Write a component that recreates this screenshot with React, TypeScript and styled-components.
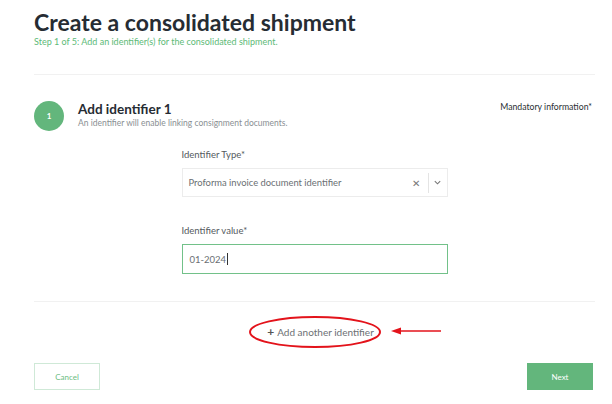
import styled, { createGlobalStyle } from 'styled-components';

const GlobalStyle = createGlobalStyle`
  * { box-sizing: border-box; }
  body {
    margin: 0;
    background: #ffffff;
    font-family: Lato, "Noto Sans", sans-serif;
  }
`;

const Page = styled.div`
  width: 612px;
  height: 404px;
  padding: 8px 17px 0 34px;
  overflow: hidden;
`;

const Title = styled.h1`
  margin: 0;
  font-size: 23px;
  line-height: 28px;
  font-weight: 700;
  color: #262c33;
`;

const Subtitle = styled.p`
  margin: 0;
  font-size: 9px;
  line-height: 12px;
  color: #5dba77;
`;

const Divider = styled.hr<{ $top: number }>`
  margin: ${(p) => p.$top}px 0 0;
  border: 0;
  border-top: 1px solid #f1f1f1;
`;

const StepHeader = styled.div`
  display: flex;
  align-items: flex-start;
  margin-top: 26px;
`;

const StepCircle = styled.div`
  width: 30px;
  height: 30px;
  border-radius: 50%;
  background: #63b67c;
  color: #fff;
  font-size: 8px;
  font-weight: 700;
  display: flex;
  align-items: center;
  justify-content: center;
  flex-shrink: 0;
`;

const StepText = styled.div`
  margin-left: 14px;
  flex: 1;
`;

const StepTitle = styled.div`
  font-size: 13.5px;
  line-height: 16px;
  font-weight: 700;
  color: #262c33;
`;

const StepHint = styled.div`
  margin-top: 1px;
  font-size: 8.5px;
  line-height: 10px;
  color: #8a8f93;
`;

const Mandatory = styled.div`
  font-size: 8.7px;
  line-height: 12px;
  color: #2a2f33;
  margin-right: 3px;
`;

const Form = styled.div`
  width: 266px;
  margin: 18px auto 0;
  display: flex;
  flex-direction: column;
`;

const Label = styled.label`
  font-size: 9.5px;
  line-height: 12px;
  color: #555a5e;
  margin-bottom: 7px;
`;

const SelectBox = styled.div`
  height: 29px;
  border: 1px solid #ececec;
  display: flex;
  align-items: center;
  padding-left: 6px;
  margin-bottom: 28px;
`;

const SelectValue = styled.span`
  flex: 1;
  font-size: 9.4px;
  color: #6a6f73;
`;

const ClearIcon = styled.span`
  font-size: 10px;
  color: #777;
  width: 18px;
  text-align: center;
`;

const Separator = styled.span`
  width: 1px;
  height: 20px;
  background: #e4e4e4;
  margin: 0 4px 0 3px;
`;

const Chevron = styled.svg`
  width: 9px;
  height: 9px;
  margin-right: 5px;
`;

const ValueInput = styled.div`
  height: 30px;
  border: 1.5px solid #72c189;
  display: flex;
  align-items: center;
  padding-left: 7px;
  font-size: 9.5px;
  color: #6a6f73;
`;

const Caret = styled.span`
  display: inline-block;
  width: 1px;
  height: 12px;
  background: #333;
  margin-left: 1px;
`;

const AddRow = styled.div`
  display: flex;
  justify-content: center;
  align-items: center;
  margin-top: 20px;
  position: relative;
  height: 20px;
`;

const AddButton = styled.button`
  background: none;
  border: 0;
  padding: 0 0 0 12px;
  font-family: inherit;
  font-size: 10px;
  color: #6c7074;
  display: flex;
  align-items: center;
  gap: 3px;
`;

const Plus = styled.span`
  font-size: 12px;
  font-weight: 700;
  color: #555;
  line-height: 1;
`;

const Annotation = styled.svg`
  position: absolute;
  left: calc(50% - 66px);
  top: -10px;
  width: 200px;
  height: 40px;
  overflow: visible;
  pointer-events: none;
`;

const Footer = styled.div`
  display: flex;
  justify-content: space-between;
  margin-top: 21px;
  padding-right: 2px;
`;

const FooterButton = styled.button<{ $primary?: boolean }>`
  width: 66px;
  height: 27px;
  font-family: inherit;
  font-size: 8px;
  border: 1px solid ${(p) => (p.$primary ? '#63b67c' : '#cfe9d7')};
  background: ${(p) => (p.$primary ? '#63b67c' : '#fff')};
  color: ${(p) => (p.$primary ? '#fff' : '#6cbd83')};
`;

export default function App() {
  return (
    <>
      <GlobalStyle />
      <Page>
        <Title>Create a consolidated shipment</Title>
        <Subtitle>Step 1 of 5: Add an identifier(s) for the consolidated shipment.</Subtitle>
        <Divider $top={26} />

        <StepHeader>
          <StepCircle>1</StepCircle>
          <StepText>
            <StepTitle>Add identifier 1</StepTitle>
            <StepHint>An identifier will enable linking consignment documents.</StepHint>
          </StepText>
          <Mandatory>Mandatory information*</Mandatory>
        </StepHeader>

        <Form>
          <Label>Identifier Type*</Label>
          <SelectBox>
            <SelectValue>Proforma invoice document identifier</SelectValue>
            <ClearIcon>✕</ClearIcon>
            <Separator />
            <Chevron viewBox="0 0 10 10">
              <path d="M2 3.5 L5 6.5 L8 3.5" fill="none" stroke="#777" strokeWidth="1.2" />
            </Chevron>
          </SelectBox>
          <Label>Identifier value*</Label>
          <ValueInput>
            01-2024
            <Caret />
          </ValueInput>
        </Form>

        <Divider $top={27} />

        <AddRow>
          <AddButton>
            <Plus>+</Plus>
            Add another identifier
          </AddButton>
          <Annotation viewBox="0 0 200 40">
            <ellipse cx="66" cy="20" rx="65" ry="15" fill="none" stroke="#e3131b" strokeWidth="2" />
            <line x1="150" y1="19" x2="192" y2="19" stroke="#e3131b" strokeWidth="1.6" />
            <path d="M142 19 L152 15.5 L152 22.5 Z" fill="#e3131b" />
          </Annotation>
        </AddRow>

        <Footer>
          <FooterButton>Cancel</FooterButton>
          <FooterButton $primary>Next</FooterButton>
        </Footer>
      </Page>
    </>
  );
}
